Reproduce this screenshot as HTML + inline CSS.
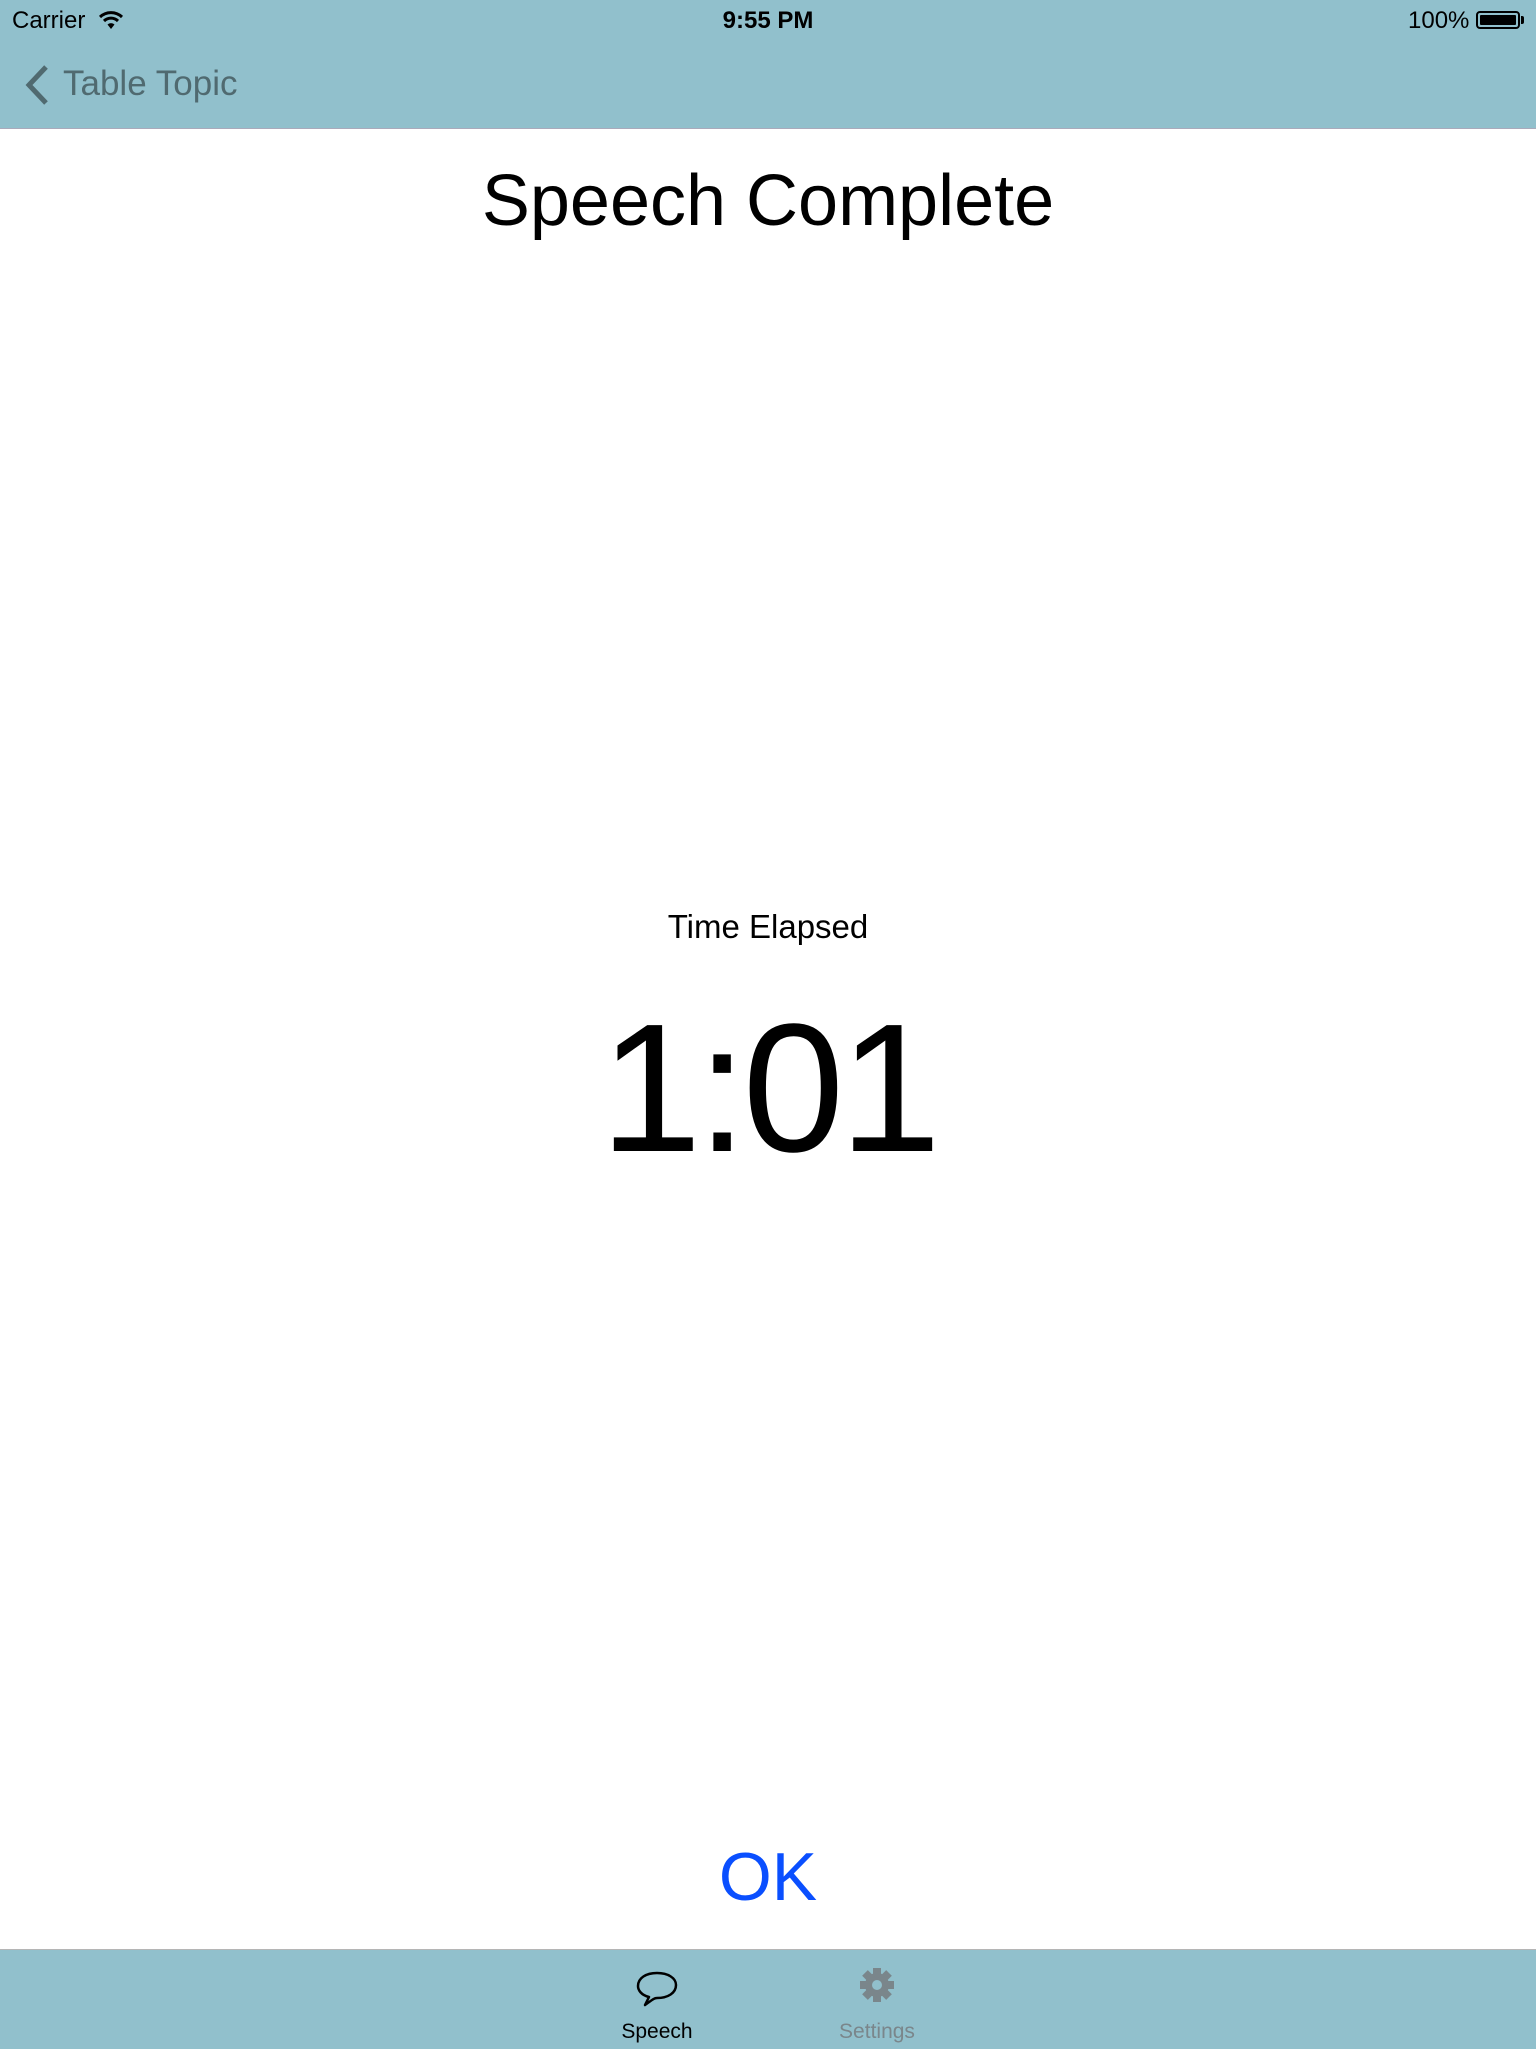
<!DOCTYPE html>
<html><head><meta charset="utf-8"><style>
html,body{margin:0;padding:0;width:1536px;height:2048px;overflow:hidden;background:#fff;font-family:"Liberation Sans",sans-serif;}
.abs{position:absolute;white-space:nowrap;}
#nav{position:absolute;left:0;top:0;width:1536px;height:128px;background:#91c0cc;border-bottom:1px solid #aab;}
#tab{position:absolute;left:0;top:1949px;width:1536px;height:99px;background:#91c0cc;border-top:1px solid #b5b5b5;}
</style></head><body>
<div id="nav">
<div class="abs" style="left:12px;top:7px;font-size:24px;color:#000">Carrier</div>
<svg class="abs" style="left:98px;top:10px" width="26" height="20" viewBox="0 0 26 20"><path d="M2 7 A16 16 0 0 1 24 7" stroke="#000" stroke-width="3" fill="none"/><path d="M6 11 A10 10 0 0 1 20 11" stroke="#000" stroke-width="3" fill="none"/><path d="M9.5 14.5 L13 19 L16.5 14.5 A5 5 0 0 0 9.5 14.5Z" fill="#000"/></svg>
<div class="abs" style="left:0;width:1536px;text-align:center;top:7px;font-size:24px;font-weight:bold;color:#000">9:55 PM</div>
<div class="abs" style="left:1408px;top:7px;font-size:24px;color:#000">100%</div>
<div class="abs" style="left:1476px;top:11px;width:44px;height:18px;border:2px solid #000;border-radius:4px;box-sizing:border-box;padding:2px"><div style="background:#000;width:100%;height:100%;border-radius:1px"></div></div>
<div class="abs" style="left:1521px;top:16px;width:3px;height:8px;background:#000;border-radius:0 2px 2px 0"></div>
<svg class="abs" style="left:22px;top:64px" width="30" height="42" viewBox="0 0 30 42"><path d="M24 3 L7 21 L24 39" stroke="#506a70" stroke-width="5" fill="none"/></svg>
<div class="abs" style="left:63px;top:64px;font-size:35px;color:#506a70">Table Topic</div>
</div>
<div class="abs" style="left:0;width:1536px;text-align:center;top:160px;font-size:72px;color:#000">Speech Complete</div>
<div class="abs" style="left:0;width:1536px;text-align:center;top:908px;font-size:33px;color:#000">Time Elapsed</div>
<div class="abs" style="left:0;width:1536px;text-align:center;top:987px;font-size:183px;color:#000;letter-spacing:-5px;line-height:1.1">1:01</div>
<div class="abs" style="left:0;width:1536px;text-align:center;top:1838px;font-size:68px;color:#0a4fff">OK</div>
<div id="tab">
<svg class="abs" style="left:634px;top:20px" width="46" height="40" viewBox="0 0 46 40"><path d="M11 35 L15 27 C7 25 4 20 4 16 C4 8 12 3 23 3 C34 3 42 8 42 15 C42 23 34 28 23 28 C20 28 18 30 11 35 Z" stroke="#000" stroke-width="2.5" fill="none" stroke-linejoin="round"/></svg>
<div class="abs" style="left:557px;width:200px;text-align:center;top:70px;font-size:21px;color:#000">Speech</div>
<svg class="abs" style="left:858px;top:16px" width="38" height="38" viewBox="-19 -19 38 38"><g fill="#7a868b"><circle r="12"/><rect x="-4" y="-17" width="8" height="34"/><rect x="-4" y="-17" width="8" height="34" transform="rotate(45)"/><rect x="-4" y="-17" width="8" height="34" transform="rotate(90)"/><rect x="-4" y="-17" width="8" height="34" transform="rotate(135)"/></g><circle r="5" fill="#91c0cc"/></svg>
<div class="abs" style="left:777px;width:200px;text-align:center;top:70px;font-size:21px;color:#7a868b">Settings</div>
</div>
</body></html>
